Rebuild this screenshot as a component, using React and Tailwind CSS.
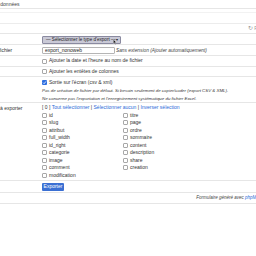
const fieldsLeft = ["id", "slug", "attribut", "full_width", "id_right", "categorie", "image", "comment", "modification"];
const fieldsRight = ["titre", "page", "ordre", "sommaire", "content", "description", "share", "creation"];

function Box({ checked }) {
  if (checked) {
    return (
      <span className="inline-flex items-center justify-center w-[5px] h-[5px] rounded-[1px] bg-[#2f6fe0] mr-[2px] shrink-0">
        <svg viewBox="0 0 10 10" className="w-[5px] h-[5px]">
          <path d="M2 5.2 L4.2 7.4 L8 2.8" fill="none" stroke="#fff" strokeWidth="1.6" />
        </svg>
      </span>
    );
  }
  return <span className="inline-block w-[5px] h-[5px] rounded-[1px] border-[0.5px] border-[#a8a8a8] bg-white mr-[2px] shrink-0" />;
}

function Row({ label, children, className = "" }) {
  return (
    <div className={"flex border-b border-[#e6e6e6] " + className}>
      <div className="w-[62px] shrink-0 pt-[2px] text-[#333] whitespace-nowrap">{label}</div>
      <div className="flex-1">{children}</div>
    </div>
  );
}

export default function App() {
  return (
    <div className="w-[256px] h-[256px] overflow-hidden bg-white text-[5px] leading-[7.5px] text-[#333]" style={{ fontFamily: "'Liberation Sans', Arial, sans-serif" }}>
      <div className="ml-[-20px] w-[276px]">
        <div className="h-[9px] border-b border-[#e6e6e6] pt-[1px] pl-[1px] text-[#444] whitespace-nowrap">
          <span className="ml-[-6px]">Export des données</span>
        </div>
        <div className="h-[12px] border-b border-[#ececec] mt-[3px] border-t border-t-[#f2f2f2]" />
        <div className="h-[10px] border-b border-[#e6e6e6] flex items-center justify-end text-[#999] whitespace-nowrap">
          <span className="mr-[-24px] flex items-center">
            <span className="mr-[1px] text-[6px]">↻</span>Réinitialiser
          </span>
        </div>

        <div className="mt-[1px]">
          <Row label="" className="h-[10px] items-center">
            <div className="w-[79px] h-[8px] border border-[#8a8aa0] bg-[#c9c9d6] rounded-[1px] flex items-center pl-[3px] pr-[2px] text-[#222] text-[4.6px] whitespace-nowrap relative">
              — Sélectionner le type d'export —
              <span className="ml-auto text-[4px]">▾</span>
              <svg viewBox="0 0 10 14" className="absolute right-[3px] top-[2px] w-[4px] h-[6px]">
                <path d="M1 1 L1 11 L3.5 8.6 L5.5 13 L7 12.3 L5 8 L8.5 8 Z" fill="#111" stroke="#fff" strokeWidth="0.8" />
              </svg>
            </div>
          </Row>
          <Row label="Nom du fichier" className="h-[11px]">
            <div className="flex items-center pt-[1.5px] whitespace-nowrap">
              <div className="w-[73px] h-[7.5px] border border-[#b5b5b5] rounded-[1px] px-[2px] flex items-center text-[#222]">export_nonoweb</div>
              <span className="ml-[1px] italic text-[4.8px] text-[#444]">Sans extension (Ajouter automatiquement)</span>
            </div>
          </Row>
          <Row label="" className="h-[11px]">
            <div className="flex items-center h-full whitespace-nowrap">
              <Box />Ajouter la date et l'heure au nom de fichier
            </div>
          </Row>
          <Row label="" className="h-[10px]">
            <div className="flex items-center h-full">
              <Box />Ajouter les entêtes de colonnes
            </div>
          </Row>
          <Row label="" className="h-[26px]">
            <div className="pt-[2px] whitespace-nowrap">
              <div className="flex items-center">
                <Box checked />Sortie sur l'écran (csv &amp; xml)
              </div>
              <div className="italic text-[4.4px] leading-[8px] mt-[0.5px] text-[#333]">
                <div>Pas de création de fichier par défaut. Si besoin seulement de copier/coder (export CSV &amp; XML).</div>
                <div>Ne concerne pas l'exportation et l'enregistrement systématique du fichier Excel.</div>
              </div>
            </div>
          </Row>
          <Row label="Champs à exporter" className="h-[78px]">
            <div className="pt-[1px] whitespace-nowrap">
              <div>
                [ 0 ] <span className="text-[#2a6ad8]">Tout sélectionner</span> | <span className="text-[#2a6ad8]">Sélectionner aucun</span> | <span className="text-[#2a6ad8]">Inverser sélection</span>
              </div>
              <div className="grid grid-cols-[81px_81px]">
                <div>
                  {fieldsLeft.map((f) => (
                    <div key={f} className="flex items-center">
                      <Box />{f}
                    </div>
                  ))}
                </div>
                <div>
                  {fieldsRight.map((f) => (
                    <div key={f} className="flex items-center">
                      <Box />{f}
                    </div>
                  ))}
                </div>
              </div>
            </div>
          </Row>
          <Row label="" className="h-[12px] items-center">
            <div className="flex items-center h-full">
              <span className="w-[22px] h-[8px] bg-[#3a6fd3] text-white rounded-[1px] flex items-center justify-center">Exporter</span>
            </div>
          </Row>
          <div className="h-[11px] border-b border-[#e6e6e6] flex items-center justify-end italic text-[4.5px] text-[#444] whitespace-nowrap">
            <span className="mr-[-13px]">Formulaire généré avec <span className="text-[#2a6ad8]">phpMyForm</span></span>
          </div>
        </div>
      </div>
    </div>
  );
}
